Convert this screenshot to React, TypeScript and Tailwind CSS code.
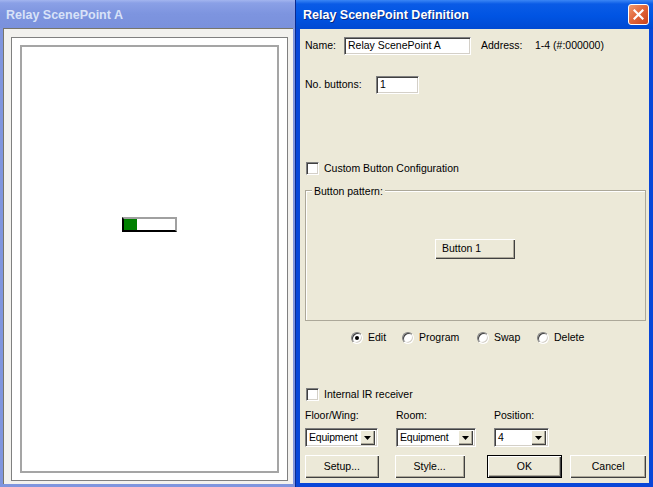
import React from "react";

const font = { fontFamily: '"Liberation Sans", Arial, sans-serif' };

function Sunken({ className = "", children }: { className?: string; children?: React.ReactNode }) {
  return (
    <div
      className={
        "bg-white border border-t-[#808080] border-l-[#808080] border-b-white border-r-white shadow-[inset_1px_1px_0_#404040,inset_-1px_-1px_0_#d4d0c8] " +
        className
      }
    >
      {children}
    </div>
  );
}

function RaisedButton({ className = "", children, def = false }: { className?: string; children?: React.ReactNode; def?: boolean }) {
  return (
    <div
      className={
        "flex items-center bg-[#ece9d8] text-black " +
        (def
          ? "border border-black shadow-[inset_1px_1px_0_#fff,inset_-1px_-1px_0_#404040,inset_-2px_-2px_0_#aca899] "
          : "shadow-[inset_1px_1px_0_#fff,inset_-1px_-1px_0_#404040,inset_-2px_-2px_0_#aca899] ") +
        className
      }
    >
      {children}
    </div>
  );
}

function Checkbox() {
  return <Sunken className="w-[13px] h-[13px] shrink-0" />;
}

function Radio({ checked = false }: { checked?: boolean }) {
  return (
    <div className="w-[12px] h-[12px] shrink-0 rounded-full bg-white border border-t-[#808080] border-l-[#808080] border-b-white border-r-white shadow-[inset_1px_1px_0_#404040,inset_-1px_-1px_0_#d4d0c8] flex items-center justify-center">
      {checked && <div className="w-[4px] h-[4px] rounded-full bg-black" />}
    </div>
  );
}

function Combo({ w, text }: { w: string; text: string }) {
  return (
    <Sunken className={"h-[19px] flex items-center p-[2px] " + w}>
      <div className="flex-1 pl-[1px] text-[10.5px] leading-none whitespace-nowrap tracking-[-0.2px]">{text}</div>
      <RaisedButton className="w-[15px] h-[15px] shrink-0 justify-center">
        <svg width="7" height="4" viewBox="0 0 7 4">
          <path d="M0 0H7L3.5 4Z" fill="#000" />
        </svg>
      </RaisedButton>
    </Sunken>
  );
}

export default function App() {
  return (
    <div className="flex w-[653px] h-[487px] overflow-hidden text-[10.5px] text-black" style={font}>
      {/* Left inactive window */}
      <div className="w-[295px] h-[487px] flex flex-col bg-[#7f95de]">
        <div className="h-[28px] flex items-center pl-[6px] pt-[2px] bg-[linear-gradient(#a3b5ef_0px,#8aa0e6_3px,#7d94df_14px,#7a91dc_28px)] text-[#d8e2f8] font-bold text-[12.5px]">
          Relay ScenePoint A
        </div>
        <div className="flex-1 ml-[3px] mr-[2px] mb-[3px] flex flex-col bg-[#f2f1ee] border-t border-l border-[#77756a] pl-[7px] pt-[8px] pr-[5px] pb-[3px]">
          <div className="flex-1 bg-white border border-[#808080] p-[8px] pt-[7px] pb-[7px] flex flex-col">
            <div className="flex-1 border-2 border-[#a5a5a5] flex flex-col items-center pt-[170px]">
              <div className="w-[55px] h-[15px] flex border-t-2 border-r-2 border-t-[#a0a0a0] border-r-[#a0a0a0] border-l-2 border-b-2 border-l-black border-b-black bg-white">
                <div className="w-[13px] h-full bg-[#008000]" />
              </div>
            </div>
          </div>
        </div>
      </div>

      {/* Right active dialog */}
      <div className="w-[358px] h-[487px] flex flex-col bg-[#0846d8] border-l border-[#0a2a90]">
        <div className="h-[29px] flex items-center justify-between pl-[7px] pr-[4px] bg-[linear-gradient(#3b86f5_0px,#0a5be6_4px,#0054e3_16px,#0049d2_29px)]">
          <span className="text-white font-bold text-[12.5px] pt-[1px] [text-shadow:1px_1px_0_#0a2a80]">Relay ScenePoint Definition</span>
          <div className="w-[21px] h-[21px] rounded-[3px] border border-white bg-[linear-gradient(135deg,#f09a6e,#e2683c_45%,#c9421c)] flex items-center justify-center">
            <svg width="11" height="11" viewBox="0 0 11 11">
              <path d="M1.5 1.5L9.5 9.5M9.5 1.5L1.5 9.5" stroke="#fff" strokeWidth="2.2" strokeLinecap="square" />
            </svg>
          </div>
        </div>
        <div className="flex-1 ml-[4px] mr-[4px] mb-[4px] bg-[#ece9d8] flex flex-col pl-[5px] pr-[3px]">
          {/* Name row */}
          <div className="mt-[8px] h-[18px] flex items-center">
            <div className="w-[39px]">Name:</div>
            <Sunken className="w-[127px] h-[18px] flex items-center pl-[3px]">Relay ScenePoint A</Sunken>
            <div className="ml-[10px] w-[54px]">Address:</div>
            <div>1-4 (#:000000)</div>
          </div>
          {/* No. buttons */}
          <div className="mt-[21px] h-[18px] flex items-center">
            <div className="w-[71px]">No. buttons:</div>
            <Sunken className="w-[43px] h-[18px] flex items-center pl-[3px]">1</Sunken>
          </div>
          {/* Custom config */}
          <div className="mt-[68px] h-[13px] flex items-center pl-[1px]">
            <Checkbox />
            <div className="ml-[5px]">Custom Button Configuration</div>
          </div>
          {/* Group box */}
          <div className="mt-[15px] h-[131px] relative border border-[#aca899] shadow-[inset_1px_1px_0_#fff] flex flex-col items-center">
            <div className="absolute -top-[6px] left-[6px] px-[2px] bg-[#ece9d8] leading-[13px]">Button pattern:</div>
            <RaisedButton className="mt-[48px] w-[80px] h-[20px] mr-[1px] pl-[7px]">Button 1</RaisedButton>
          </div>
          {/* Radios */}
          <div className="mt-[10px] h-[13px] flex items-center pl-[46px]">
            <div className="w-[51px] flex items-center">
              <Radio checked />
              <span className="ml-[5px]">Edit</span>
            </div>
            <div className="w-[75px] flex items-center">
              <Radio />
              <span className="ml-[5px]">Program</span>
            </div>
            <div className="w-[60px] flex items-center">
              <Radio />
              <span className="ml-[5px]">Swap</span>
            </div>
            <div className="flex items-center">
              <Radio />
              <span className="ml-[5px]">Delete</span>
            </div>
          </div>
          {/* IR */}
          <div className="mt-[44px] h-[13px] flex items-center pl-[1px]">
            <Checkbox />
            <div className="ml-[5px]">Internal IR receiver</div>
          </div>
          {/* Labels */}
          <div className="mt-[8px] h-[13px] flex items-center">
            <div className="w-[91px]">Floor/Wing:</div>
            <div className="w-[98px]">Room:</div>
            <div>Position:</div>
          </div>
          {/* Combos */}
          <div className="mt-[6px] flex items-center">
            <Combo w="w-[73px]" text="Equipment" />
            <div className="ml-[18px]">
              <Combo w="w-[80px]" text="Equipment" />
            </div>
            <div className="ml-[18px]">
              <Combo w="w-[55px]" text="4" />
            </div>
          </div>
          {/* Buttons */}
          <div className="mt-[8px] flex items-center">
            <RaisedButton className="w-[74px] h-[23px] justify-center">Setup...</RaisedButton>
            <RaisedButton className="ml-[16px] w-[70px] h-[23px] justify-center">Style...</RaisedButton>
            <RaisedButton def className="ml-[22px] w-[76px] h-[23px] justify-center">OK</RaisedButton>
            <RaisedButton className="ml-[8px] w-[76px] h-[23px] justify-center">Cancel</RaisedButton>
          </div>
        </div>
      </div>
    </div>
  );
}
